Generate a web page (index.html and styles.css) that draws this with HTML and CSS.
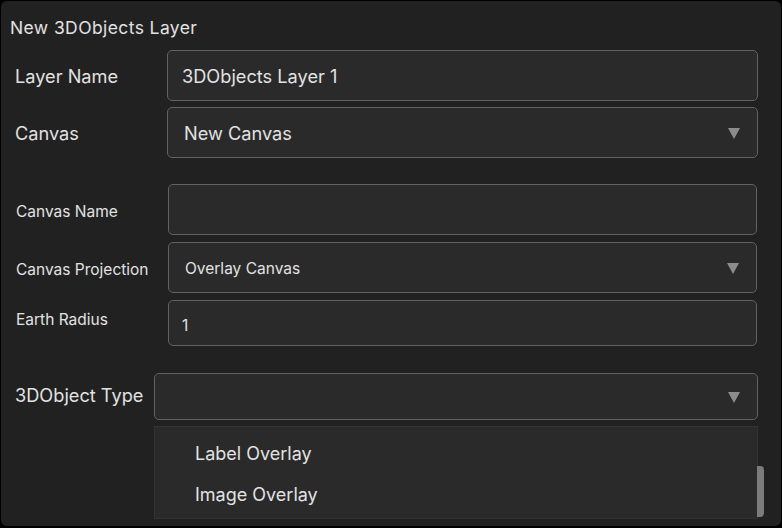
FILE: index.html
```html
<!DOCTYPE html>
<html>
<head>
<meta charset="utf-8">
<link rel="stylesheet" href="styles.css">
</head>
<body>
<div class="panel">
  <div class="title">New 3DObjects Layer</div>

  <div class="row row-lg r1">
    <div class="label lbl-lg">Layer Name</div>
    <div class="field f-wide"><span class="value v-lg">3DObjects Layer 1</span></div>
  </div>

  <div class="row row-lg r2">
    <div class="label lbl-lg">Canvas</div>
    <div class="field f-wide select"><span class="value v-lg v-canvas">New Canvas</span><span class="arrow"></span></div>
  </div>

  <div class="row row-sm r3">
    <div class="label lbl-sm">Canvas Name</div>
    <div class="field f-mid"></div>
  </div>

  <div class="row row-sm r4">
    <div class="label lbl-sm">Canvas Projection</div>
    <div class="field f-mid select"><span class="value v-sm">Overlay Canvas</span><span class="arrow"></span></div>
  </div>

  <div class="row row-sm r5">
    <div class="label lbl-sm lbl-top">Earth Radius</div>
    <div class="field f-mid f-short"><span class="value v-sm v-one">1</span></div>
  </div>

  <div class="row row-type r6">
    <div class="label lbl-lg">3DObject Type</div>
    <div class="type-col">
      <div class="field f-type select"><span class="arrow"></span></div>
      <div class="list-wrap">
        <ul class="list">
          <li>Label Overlay</li>
          <li>Image Overlay</li>
        </ul>
        <div class="scrollbar"></div>
      </div>
    </div>
  </div>
</div>
</body>
</html>
```

FILE: styles.css
```css
* { box-sizing: border-box; }
html, body { margin: 0; padding: 0; background: #000; }
body {
  width: 782px;
  height: 528px;
  font-family: Inter, "Noto Sans", "Liberation Sans", sans-serif;
  color: #e2e2e2;
}
.panel {
  width: 782px;
  height: 527px;
  background: #212121;
  border: 1px solid #000;
  border-radius: 7px;
  padding: 0;
  display: flex;
  flex-direction: column;
  overflow: hidden;
}
.title {
  margin-top: 15px;
  padding-left: 9px;
  height: 24px;
  line-height: 24px;
  font-size: 17.5px;
  letter-spacing: 0.4px;
}
.row {
  display: flex;
  align-items: center;
}
.label { flex: none; }
.lbl-lg { font-size: 18.2px; padding-left: 14px; width: 166px; }
.lbl-sm { font-size: 15.5px; padding-left: 15px; width: 167px; padding-top: 3px; }
.row-type .lbl-lg { width: 153px; align-self: flex-start; height: 47px; line-height: 44px; }
.lbl-sm.lbl-top { align-self: flex-start; padding-top: 10px; }

.r1 { margin-top: 10px; }
.r2 { margin-top: 6px; }
.r3 { margin-top: 26px; }
.r4 { margin-top: 7px; }
.r5 { margin-top: 7px; }
.r6 { margin-top: 27px; align-items: flex-start; }

.field {
  position: relative;
  background: #2a2a2a;
  border: 1px solid #626262;
  border-radius: 5px;
  display: flex;
  align-items: center;
}
.f-wide { width: 591px; height: 51px; }
.f-mid { width: 589px; height: 51px; }
.f-short { height: 46px; }
.f-type { width: 604px; height: 47px; }

.value { padding-left: 14px; }
.v-lg { font-size: 18.2px; }
.v-canvas { padding-left: 16px; }
.v-sm { font-size: 15.5px; padding-left: 16px; padding-top: 2px; }
.v-one { padding-left: 13px; padding-top: 4px; }

.arrow {
  position: absolute;
  right: 17px;
  top: 50%;
  margin-top: -5px;
  width: 0;
  height: 0;
  border-left: 6px solid transparent;
  border-right: 6px solid transparent;
  border-top: 11px solid #8c8c8c;
}

.type-col { display: flex; flex-direction: column; }
.list-wrap {
  margin-top: 6px;
  display: flex;
  align-items: flex-end;
}
.list {
  list-style: none;
  margin: 0;
  padding: 8px 0 0 40px;
  width: 604px;
  height: 93px;
  background: #2a2a2a;
  border: 1px solid #323232;
  font-size: 18px;
}
.list li {
  height: 41px;
  line-height: 38px;
}
.scrollbar {
  width: 7px;
  height: 51px;
  margin-bottom: 2px;
  margin-left: -1px;
  background: #7b7b7b;
  border-radius: 0 4px 4px 0;
}
```
